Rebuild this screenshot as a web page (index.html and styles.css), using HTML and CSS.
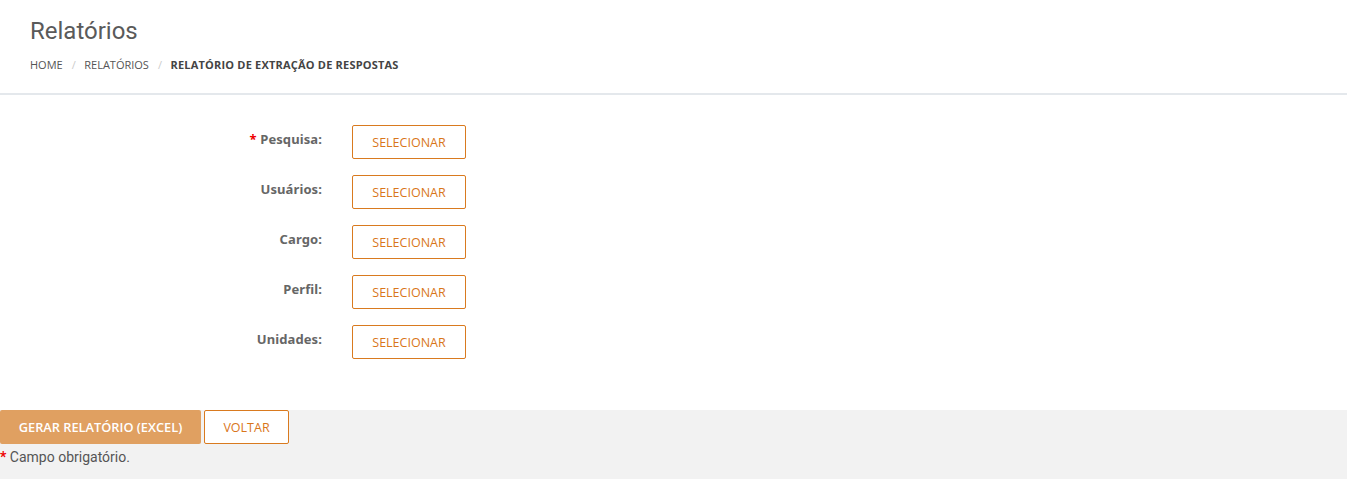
FILE: index.html
```html
<!DOCTYPE html>
<html lang="pt-BR">
<head>
<meta charset="utf-8">
<title>Relatórios</title>
<link rel="stylesheet" href="styles.css">
</head>
<body>
<header class="page-header">
  <h1 class="title">Relatórios</h1>
  <nav class="breadcrumb">
    <span class="crumb">HOME</span><span class="sep">/</span>
    <span class="crumb">RELATÓRIOS</span><span class="sep">/</span>
    <span class="crumb active">RELATÓRIO DE EXTRAÇÃO DE RESPOSTAS</span>
  </nav>
</header>
<main class="form">
  <div class="row"><label class="label"><span class="req">*</span> Pesquisa:</label><button class="btn-outline">SELECIONAR</button></div>
  <div class="row"><label class="label">Usuários:</label><button class="btn-outline">SELECIONAR</button></div>
  <div class="row"><label class="label">Cargo:</label><button class="btn-outline">SELECIONAR</button></div>
  <div class="row"><label class="label">Perfil:</label><button class="btn-outline">SELECIONAR</button></div>
  <div class="row"><label class="label">Unidades:</label><button class="btn-outline">SELECIONAR</button></div>
</main>
<footer class="footer">
  <div class="actions">
    <button class="btn-primary">GERAR RELATÓRIO (EXCEL)</button>
    <button class="btn-outline btn-back">VOLTAR</button>
  </div>
  <p class="note"><span class="req">*</span> Campo obrigatório.</p>
</footer>
</body>
</html>
```
FILE: styles.css
```css
html, body { margin: 0; padding: 0; background: #fff; }
body { font-family: Roboto, "Liberation Sans", sans-serif; color: #555; }

.page-header {
  padding: 16px 30px 0;
  height: 77px;
  border-bottom: 2px solid #e4e8ec;
}
.title {
  margin: 0;
  font-family: Roboto, sans-serif;
  font-weight: 400;
  font-size: 24px;
  line-height: 30px;
  color: #5a5a5a;
}
.breadcrumb {
  margin-top: 9px;
  font-family: "Open Sans", sans-serif;
  font-size: 11px;
  line-height: 20px;
  color: #555;
  display: flex;
  align-items: center;
}
.sep { color: #ccc; margin: 0 8.5px 0 9px; }
.active { font-weight: 700; color: #444; letter-spacing: 0.2px; }

.form {
  padding-top: 30px;
  display: grid;
  grid-template-columns: 322px 114px;
  column-gap: 30px;
  row-gap: 16px;
  padding-bottom: 51px;
}
.row { display: contents; }
.label {
  text-align: right;
  font-family: "Noto Sans", "Open Sans", sans-serif;
  font-weight: 700;
  font-size: 13px;
  color: #666;
  padding-top: 5px;
  letter-spacing: 0.1px;
}
.req { color: #e00; font-weight: 700; }

button { font-family: "Open Sans", sans-serif; cursor: pointer; }
.btn-outline {
  width: 114px;
  height: 34px;
  background: #fff;
  border: 1px solid #d97a1f;
  border-radius: 2px;
  color: #d9761a;
  font-size: 12.5px;
  padding: 0;
}

.footer {
  background: #f2f2f2;
  height: 69px;
}
.actions { display: flex; gap: 3px; }
.btn-primary {
  width: 201px;
  height: 34px;
  background: #e0a061;
  border: none;
  border-radius: 2px;
  color: #fff;
  font-weight: 600;
  font-size: 12.8px;
  padding: 0;
}
.btn-back { width: 85px; }
.note {
  margin: 5px 0 0;
  font-size: 14px;
  color: #555;
}
```
